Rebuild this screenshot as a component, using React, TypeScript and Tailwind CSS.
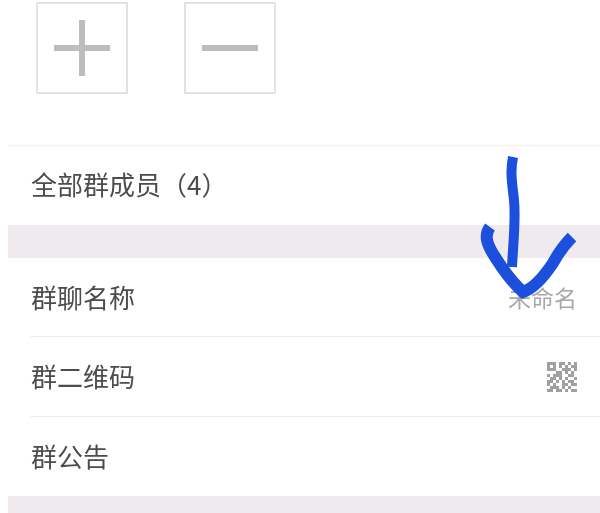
import React from 'react';

const qrCells = [
  '1110110101',
  '1010101011',
  '1110011101',
  '0001101010',
  '1011100110',
  '0110101001',
  '1101010110',
  '1010011011',
  '0111010100',
  '1101101011',
];

const QrIcon: React.FC = () => (
  <svg width="30" height="30" viewBox="0 0 30 30" className="text-[#a0a0a0]" fill="currentColor">
    {qrCells.map((row, y) =>
      row.split('').map((cell, x) =>
        cell === '1' ? <rect key={`${x}-${y}`} x={x * 3} y={y * 3} width="3" height="3" /> : null
      )
    )}
  </svg>
);

const Row: React.FC<{ label: string; right?: React.ReactNode; divider?: boolean; height: string }> = ({ label, right, divider, height }) => (
  <div className={`flex items-center justify-between pl-px pr-[23px] ml-[30px] ${height} ${divider ? 'border-b border-[#eeeeee]' : ''}`}>
    <span className="pb-[1px] text-[26px] leading-none text-[#4c4c4c]">{label}</span>
    {right}
  </div>
);

const ActionButton: React.FC<{ plus?: boolean }> = ({ plus }) => (
  <div className="relative flex h-[92px] w-[92px] items-center justify-center border-2 border-[#e2e2e2]">
    <div className="h-[6px] w-[56px] bg-[#bdbdbd]" />
    {plus && <div className="absolute h-[56px] w-[6px] bg-[#bdbdbd]" />}
  </div>
);

export default function App() {
  return (
    <div className="relative h-[513px] w-[600px] overflow-hidden bg-white font-['Noto_Sans_CJK_SC','Noto_Sans',sans-serif] blur-[0.5px]">
      <div className="flex gap-[56px] pl-[36px] pt-[2px]">
        <ActionButton plus />
        <ActionButton />
      </div>

      <div className="mt-[51px] ml-[8px] border-t border-[#f1f1f1]">
        <div className="flex h-[79px] items-center pb-[3px] pl-[23px]">
          <span className="text-[26px] leading-none text-[#4c4c4c]">全部群成员（4）</span>
        </div>
      </div>
      <div className="ml-[8px] h-[33px] bg-[#efeaee]" />

      <Row label="群聊名称" height="h-[79px]" divider right={<span className="text-[23px] leading-none text-[#a8a8a8]">未命名</span>} />
      <Row label="群二维码" height="h-[80px]" divider right={<QrIcon />} />
      <Row label="群公告" height="h-[79px]" />
      <div className="ml-[8px] h-[17px] bg-[#efeaee]" />

      {/* hand drawn arrow on top of the screenshot */}
      <svg className="absolute inset-0" width="600" height="513" viewBox="0 0 600 513" fill="none" stroke="#1b4fdc">
        <path strokeWidth="10" d="M513 157 C510 172 512 182 514 200 C516 220 513 245 512 267" />
        <path strokeWidth="12" d="M490 227 C484 235 486 244 497 260 C506 274 514 284 523 292 C535 288 545 275 553 263 C559 252 565 244 572 237" />
      </svg>
    </div>
  );
}
